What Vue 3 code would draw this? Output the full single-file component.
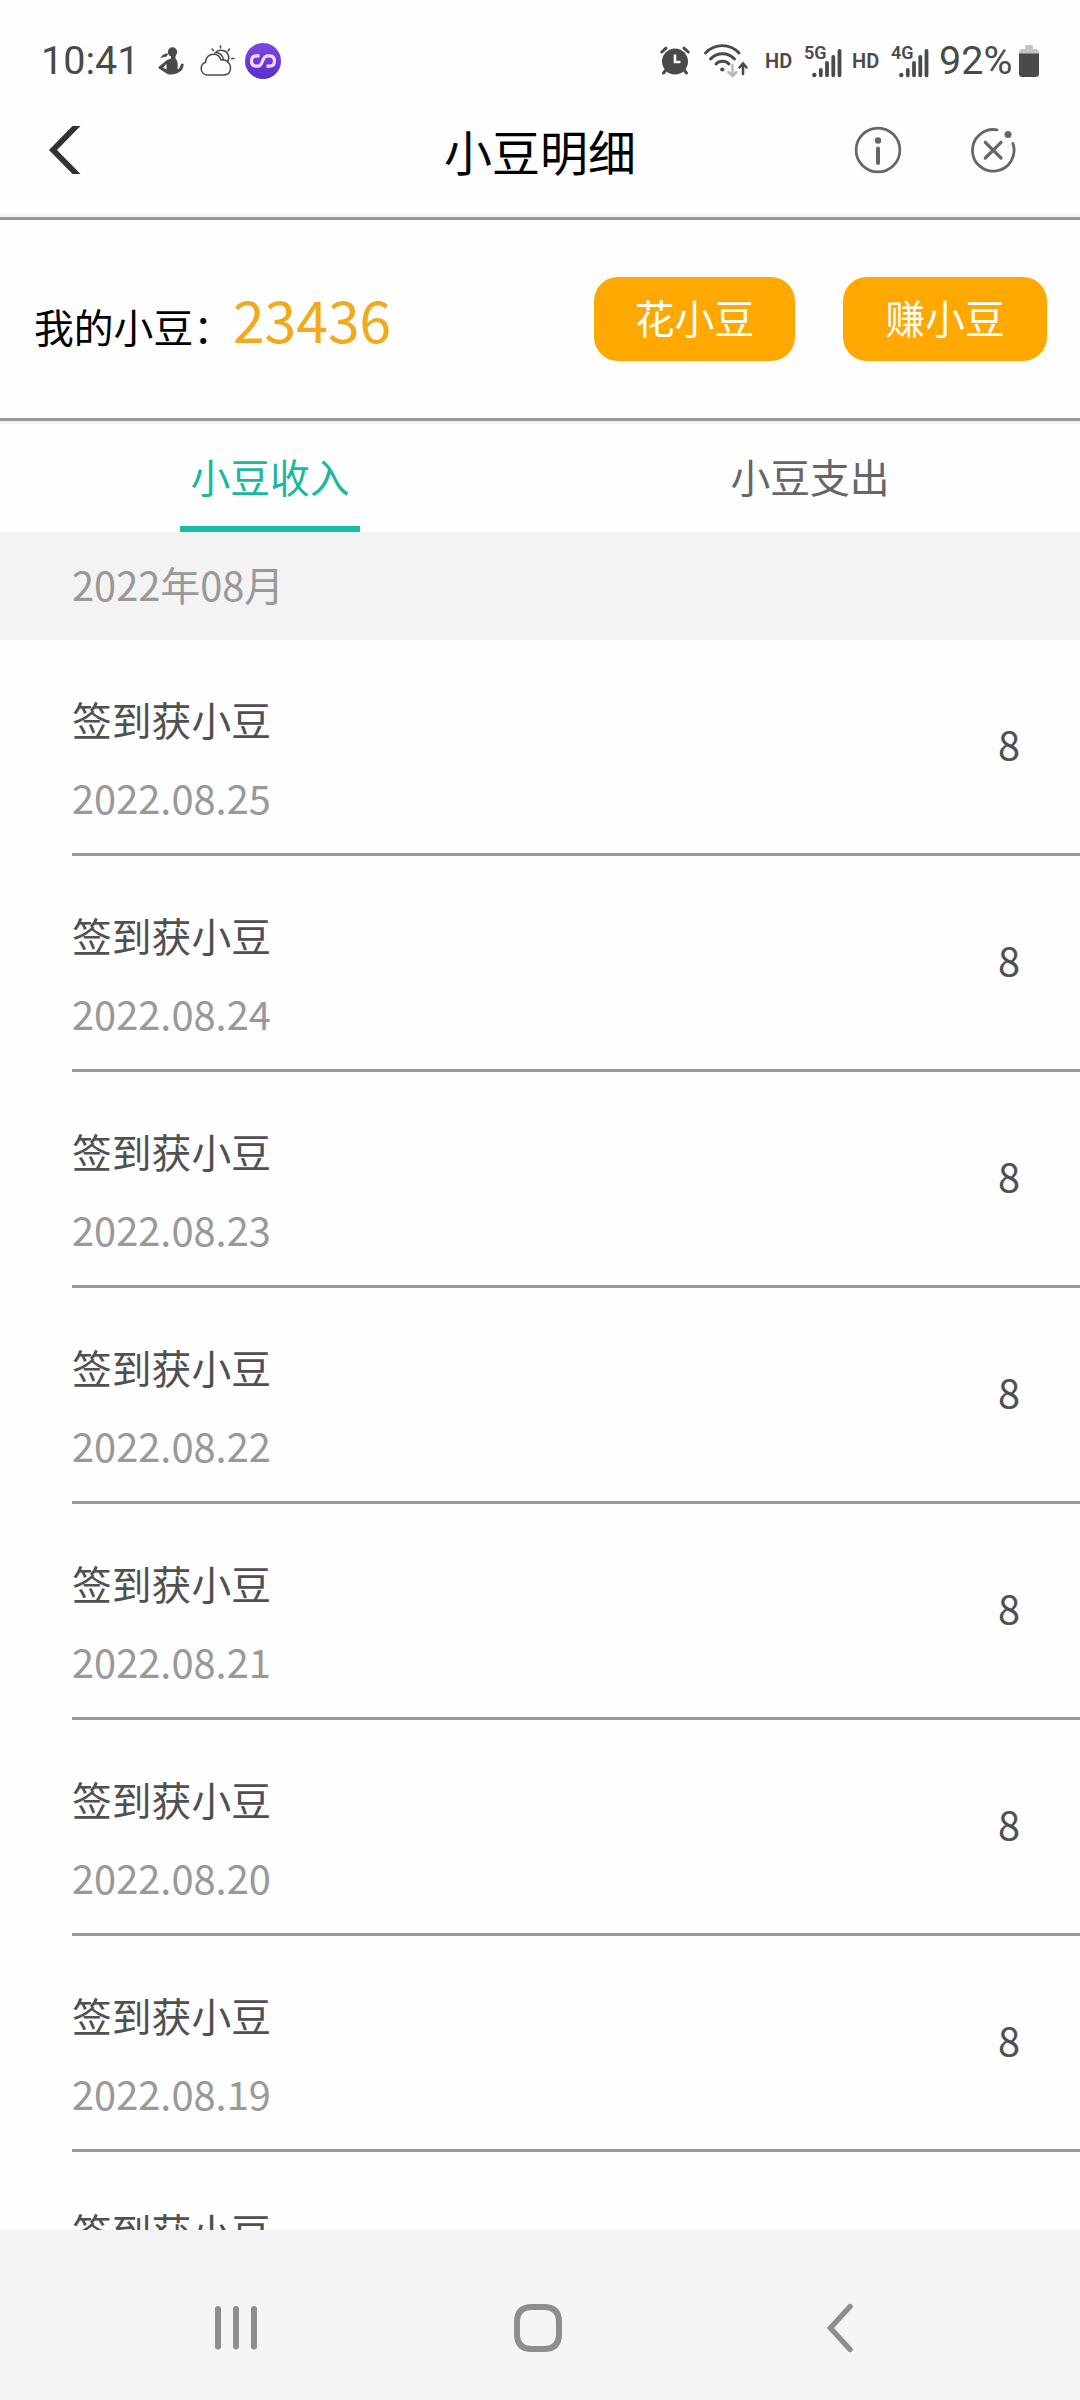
<template>
  <div class="page">
    <div class="status-bar">
      <span class="clock">10:41</span>
      <svg class="ic-person" width="26" height="30" viewBox="0 0 26 30">
        <circle cx="14.5" cy="6" r="4.7" fill="#4a4a4a" />
        <path d="M13 9L17.500 9L17.500 13C20 15 20 19 19.500 23C21.500 23 22.500 21 23 17.500L25.700 18C25.500 23.500 22 26.500 18.500 27.500C14 29.500 8 28.500 6.500 26L.8 22.500Q0 21.300 1 20.500L9 14L13 12.500ZM8.500 18L5 21.500L8.500 23.500Z" fill="#4a4a4a" fill-rule="evenodd" />
        <path d="M2.500 12C4 8.500 7 7 10.500 7.500L8.500 10.500Z" fill="#4a4a4a" />
      </svg>
      <svg class="ic-weather" width="36" height="32" viewBox="0 0 36 32" fill="none" stroke="#4a4a4a" stroke-width="1.5" stroke-linecap="round">
        <path d="M8 30C3.500 30 1.200 27 1.200 23.500C1.200 20 3 18 5.500 17.500C5.500 12.500 9 9.300 13.500 9.300C17.500 9.300 20 11.800 21 15C26 14 30.500 18 30.500 23C30.500 27.500 28 30 23.500 30Z" />
        <path d="M15 8C17 5.600 20 4.900 22.700 5.500C28 6.500 30.500 12 27.500 17M16 7.500C19 7.500 23 10 23.500 14.500" />
        <path d="M20.500 .8V3M12 4L13.500 5.500M29.500 4L28 6M31.500 13.500H34" />
      </svg>
      <svg class="ic-app" width="36" height="36" viewBox="0 0 36 36">
        <defs>
          <linearGradient id="purple" x1="0" y1="0" x2="0" y2="1">
            <stop offset="0" stop-color="#7d49e4" />
            <stop offset="1" stop-color="#5b2dcc" />
          </linearGradient>
        </defs>
        <circle cx="18" cy="18" r="18" fill="url(#purple)" />
        <path d="M14.500 12.800H11.500Q6.500 12.800 6.500 18T11.500 23.200H13C18.500 23.200 16.500 12.800 22.500 12.800H24.500Q29.500 12.800 29.500 18T24.500 23.200H21.500" fill="none" stroke="#f3dcff" stroke-width="3.200" />
      </svg>

      <div class="status-right">
        <svg class="ic-alarm" width="30" height="30" viewBox="0 0 30 30">
          <circle cx="15" cy="15.500" r="13" fill="#4a4a4a" />
          <path d="M1.800 6L6 2.200M28.200 6L24 2.200M5.500 24.500L3.500 27M24.500 24.500L26.500 27" stroke="#4a4a4a" stroke-width="3" stroke-linecap="round" />
          <path d="M15 8.500V16H20.500" fill="none" stroke="#fff" stroke-width="2.600" />
        </svg>
        <svg class="ic-wifi" width="44" height="34" viewBox="0 0 44 34" fill="none" stroke="#4a4a4a" stroke-width="2.900" stroke-linecap="round">
          <path d="M1.500 9C11-.8 26-.8 35 9M6.500 15C13 8 24 8 30.500 15M12 20C15.500 16.300 21.500 16.300 25 20" />
          <circle cx="18.300" cy="25.500" r="2.100" fill="#4a4a4a" stroke="none" />
          <path d="M28.500 21V31.500M24.500 28L28.500 32L32.500 28" stroke="#b8b8b8" stroke-width="2.500" />
          <path d="M39 30V19.500M35.500 23.500L39 19.500L42.500 23.500" stroke-width="2.500" />
        </svg>
        <template v-for="net in ['5G', '4G']" :key="net">
          <span class="hd">HD</span>
          <div class="signal">
            <span class="net">{{ net }}</span>
            <svg width="30" height="30" viewBox="0 0 30 30">
              <circle cx="2.300" cy="27" r="2.200" fill="#4a4a4a" />
              <path d="M8.800 22V27.300M15 15V27.300M21.300 9V27.300M27.500 3V27.300" stroke="#4a4a4a" stroke-width="3.800" stroke-linecap="round" />
            </svg>
          </div>
        </template>
        <span class="percent">92%</span>
        <svg class="ic-battery" width="20" height="32" viewBox="0 0 20 32">
          <path d="M6 3V1.500Q6 0 7.500 0H12.500Q14 0 14 1.500V4H16.500Q20 4 20 8V12H0V8Q0 4 3.500 4H6Z" fill="#c4c4c4" />
          <path d="M0 8.500H20V28.500Q20 32 16.500 32H3.500Q0 32 0 28.500Z" fill="#4a4a4a" />
        </svg>
      </div>
    </div>

    <header class="nav-bar">
      <div class="nav-side">
        <svg width="32" height="48" viewBox="0 0 32 48">
          <path d="M23.500 0H31.500L8 24L31.500 48H23.500L0 24Z" fill="#303330" />
        </svg>
      </div>
      <h1 class="nav-title">小豆明细</h1>
      <div class="nav-side nav-actions">
        <svg width="48" height="48" viewBox="0 0 48 48" fill="none" stroke="#666">
          <circle cx="24" cy="24" r="21.900" stroke-width="2.700" />
          <circle cx="24" cy="14.500" r="3.200" fill="#666" stroke="none" />
          <path d="M24 22.500V37" stroke-width="4" stroke-linecap="round" />
        </svg>
        <svg width="48" height="48" viewBox="0 0 48 48" fill="none" stroke="#666" stroke-width="2.800" stroke-linecap="round">
          <path d="M28 3.900A20.800 20.800 0 1 0 43.900 17.500" />
          <path d="M16.300 16.300L32 32M32 16.300L16.300 32" stroke-width="3.200" />
          <circle cx="39" cy="8.500" r="3.500" fill="#666" stroke="none" />
        </svg>
      </div>
    </header>

    <section class="balance">
      <div class="balance-text">
        <span class="balance-label">我的小豆：</span>
        <span class="balance-num">23436</span>
      </div>
      <button class="btn btn-spend">花小豆</button>
      <button class="btn btn-earn">赚小豆</button>
    </section>

    <div class="tabs">
      <div
        v-for="(tab, idx) in tabs"
        :key="tab"
        class="tab"
        :class="{ active: idx === current }"
        @click="current = idx"
      >
        <span class="tab-text">{{ tab }}</span>
      </div>
    </div>

    <div class="month">2022年08月</div>

    <div class="list">
      <div v-for="item in records" :key="item.date" class="record">
        <div class="record-info">
          <div class="record-name">{{ item.name }}</div>
          <div class="record-date">{{ item.date }}</div>
        </div>
        <span class="record-num">{{ item.num }}</span>
      </div>
    </div>

    <div class="list-foot"></div>
    <footer class="system-nav">
      <svg class="sys-recent" width="42" height="46" viewBox="0 0 42 46" stroke="#8e8e8e" stroke-width="6" stroke-linecap="round">
        <path d="M3 4V41.500M21 4V41.500M39 4V41.500" />
      </svg>
      <svg class="sys-home" width="48" height="48" viewBox="0 0 48 48">
        <path d="M18 3H30Q45 3 45 18V30Q45 45 30 45H18Q3 45 3 30V18Q3 3 18 3Z" fill="none" stroke="#8e8e8e" stroke-width="6" />
      </svg>
      <svg class="sys-back" width="28" height="50" viewBox="0 0 28 50">
        <path d="M24 3.500L4.500 25L24 46.500" fill="none" stroke="#8e8e8e" stroke-width="5.400" stroke-linecap="round" />
      </svg>
    </footer>
  </div>
</template>

<script setup>
import { ref } from 'vue';

const tabs = ['小豆收入', '小豆支出'];
const current = ref(0);

const records = [25, 24, 23, 22, 21, 20, 19, 18].map((day) => ({
  name: '签到获小豆',
  date: `2022.08.${day}`,
  num: 8
}));
</script>

<style>
body {
  margin: 0;
  background: #fff;
}
</style>

<style scoped>
.page {
  display: flex;
  flex-direction: column;
  width: 1080px;
  height: 2400px;
  overflow: hidden;
  background: #fefefe;
  font-family: 'Noto Sans CJK SC', sans-serif;
  font-size: 39.8px;
}

svg {
  display: block;
  flex: none;
}

.status-bar {
  display: flex;
  align-items: center;
  height: 82px;
  padding: 40px 41px 0 41px;
  box-sizing: border-box;
  font-family: Roboto, sans-serif;
  color: #4a4a4a;
}

.clock,
.percent {
  font-size: 39.5px;
  line-height: 40px;
}

.clock {
  width: 117px;
}

.ic-weather {
  margin-left: 16px;
}

.ic-app {
  margin-left: 9px;
}

.status-right {
  display: flex;
  align-items: center;
  margin-left: auto;
}

.ic-wifi {
  margin: 0 17px 0 14px;
}

.hd {
  width: 39px;
  font-size: 20px;
  font-weight: 600;
  line-height: 20px;
}

/* network type sits above the shorter bars */
.signal {
  display: grid;
  width: 38px;
  height: 34px;
  margin-right: 10px;
}

.signal > * {
  grid-area: 1 / 1;
}

.signal svg {
  place-self: end;
}

.net {
  font-size: 18px;
  font-weight: 600;
  line-height: 18px;
}

.percent {
  width: 80px;
}

.nav-bar {
  display: flex;
  align-items: center;
  height: 138px;
  padding: 0 63px 0 49px;
  box-sizing: border-box;
  border-bottom: 3px solid #969896;
  box-shadow: inset 0 -3px #f3f3f3;
}

.nav-side {
  flex: 1;
}

.nav-title {
  margin: 0 0 0 14px;
  font-size: 48px;
  font-weight: 400;
  line-height: 60px;
  color: #000;
}

.nav-actions {
  display: flex;
  justify-content: flex-end;
  gap: 67px;
}

.balance {
  display: flex;
  align-items: center;
  height: 204px;
  padding: 0 33px 6px 34px;
  box-sizing: border-box;
  background: linear-gradient(#999, #999) 0 198px / 100% 3px no-repeat,
    linear-gradient(#f1f1f1, #f1f1f1) 0 201px / 100% 3px no-repeat;
}

.balance-text {
  display: flex;
  align-items: baseline;
  margin-right: auto;
  padding-bottom: 2px;
}

.balance-label {
  line-height: 40px;
  color: #000;
}

.balance-num {
  font-size: 57px;
  line-height: 60px;
  color: #f2a91c;
}

.btn {
  height: 84px;
  padding: 0 0 4px;
  border: none;
  border-radius: 24px;
  background: #ffa800;
  color: #fff;
  font: inherit;
  line-height: 80px;
}

.btn-spend {
  width: 201px;
  margin-right: 48px;
}

.btn-earn {
  width: 204px;
}

.tabs {
  display: flex;
  height: 108px;
}

.tab {
  flex: 1;
  display: flex;
  justify-content: center;
  color: #666;
}

.tab-text {
  width: 180px;
  height: 108px;
  box-sizing: border-box;
  border-bottom: 6px solid transparent;
  line-height: 104px;
  text-align: center;
}

.tab.active .tab-text {
  border-bottom-color: #1abca2;
  color: #1ab8a0;
}

.month {
  height: 108px;
  padding-left: 72px;
  background: #f3f3f3;
  line-height: 104px;
  color: #999;
}

.list {
  height: 1590px;
  overflow: hidden;
}

.record {
  display: flex;
  justify-content: space-between;
  height: 216px;
  margin-left: 72px;
  padding: 55px 60px 0 0;
  box-sizing: border-box;
  border-bottom: 3px solid #999;
  line-height: 48px;
}

.record-name {
  margin-bottom: 30px;
  color: #505050;
}

.record-date {
  color: #999;
}

.record-num {
  margin-top: 24px;
  color: #505050;
}

.list-foot {
  height: 26px;
  background: #f3f3f3;
}

.system-nav {
  display: flex;
  align-items: center;
  height: 144px;
  padding-left: 215px;
  background: #f5f5f5;
}

.sys-home {
  margin-left: 257px;
}

.sys-back {
  margin-left: 264px;
}
</style>
